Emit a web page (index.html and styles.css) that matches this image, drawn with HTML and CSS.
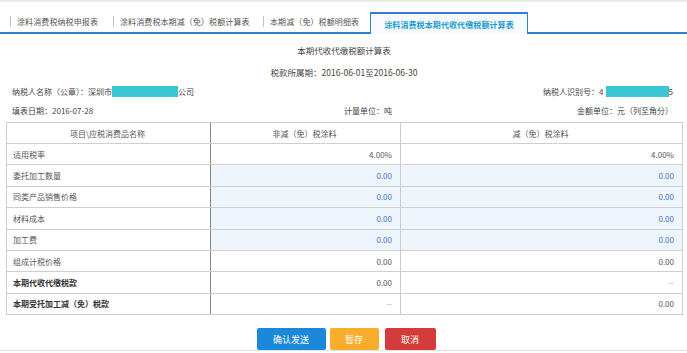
FILE: index.html
```html
<!DOCTYPE html>
<html lang="zh-CN">
<head>
  <meta charset="UTF-8">
  <title>本期代收代缴税额计算表</title>
  <link rel="stylesheet" href="styles.css">
</head>
<body>
  <div class="top-line"></div>
  <div class="tab-bar">
    <div class="tab"><span class="tab-sep"></span>涂料消费税纳税申报表</div>
    <div class="tab"><span class="tab-sep"></span>涂料消费税本期减（免）税额计算表</div>
    <div class="tab"><span class="tab-sep"></span>本期减（免）税额明细表</div>
    <div class="tab active">涂料消费税本期代收代缴税额计算表</div>
  </div>

  <div class="sheet">
    <div class="sheet-title">本期代收代缴税额计算表</div>
    <div class="sheet-period">税款所属期：2016-06-01至2016-06-30</div>

    <div class="info-row">
      <span>纳税人名称（公章）：深圳市<span class="mask mask-name"></span>公司</span>
      <span>纳税人识别号：4<span class="mask mask-id"></span>5</span>
    </div>
    <div class="info-row three">
      <span>填表日期：2016-07-28</span>
      <span>计量单位：吨</span>
      <span>金额单位：元（列至角分）</span>
    </div>

    <table class="calc-table">
      <thead>
        <tr>
          <th class="col-name">项目\应税消费品名称</th>
          <th class="col-a">非减（免）税涂料</th>
          <th class="col-b">减（免）税涂料</th>
        </tr>
      </thead>
      <tbody>
        <tr>
          <td>适用税率</td>
          <td class="num">4.00%</td>
          <td class="num">4.00%</td>
        </tr>
        <tr class="input">
          <td>委托加工数量</td>
          <td class="num">0.00</td>
          <td class="num">0.00</td>
        </tr>
        <tr class="input">
          <td>同类产品销售价格</td>
          <td class="num">0.00</td>
          <td class="num">0.00</td>
        </tr>
        <tr class="input">
          <td>材料成本</td>
          <td class="num">0.00</td>
          <td class="num">0.00</td>
        </tr>
        <tr class="input">
          <td>加工费</td>
          <td class="num">0.00</td>
          <td class="num">0.00</td>
        </tr>
        <tr>
          <td>组成计税价格</td>
          <td class="num">0.00</td>
          <td class="num">0.00</td>
        </tr>
        <tr class="strong">
          <td>本期代收代缴税款</td>
          <td class="num">0.00</td>
          <td class="num dash">--</td>
        </tr>
        <tr class="strong">
          <td>本期受托加工减（免）税款</td>
          <td class="num dash">--</td>
          <td class="num">0.00</td>
        </tr>
      </tbody>
    </table>

    <div class="actions">
      <button class="btn btn-send">确认发送</button>
      <button class="btn btn-save">暂存</button>
      <button class="btn btn-cancel">取消</button>
    </div>
  </div>
  <div class="bottom-line"></div>
</body>
</html>
```

FILE: styles.css
```css
body {
  margin: 0;
  background-color: #fff;
  font-family: "Noto Sans CJK SC", "DejaVu Sans", sans-serif;
  font-size: 8px;
  color: #555;
  width: 687px;
  height: 353px;
  overflow: hidden;
}

.top-line {
  height: 2px;
  background-color: #e4ece6;
}

/* Tabs */
.tab-bar {
  display: flex;
  align-items: flex-end;
  height: 29px;
  margin-top: 1px;
  padding-left: 10px;
  border-bottom: 2px solid #2f7fce;
}
.tab {
  display: flex;
  align-items: center;
  box-sizing: border-box;
  height: 21px;
  font-size: 8px;
  letter-spacing: 0.1px;
  color: #555;
  white-space: nowrap;
}
.tab-sep {
  display: inline-block;
  width: 1px;
  height: 11px;
  background-color: #b9c4cc;
  margin-right: 6px;
}
.tab:nth-child(1) { width: 103px; }
.tab:nth-child(2) { width: 150px; }
.tab:nth-child(3) { width: 107px; }
.tab.active {
  width: 158px;
  height: 22px;
  justify-content: center;
  background-color: #f7fbff;
  border: 1px solid #2f7fce;
  border-bottom: none;
  border-top-width: 2px;
  color: #1c9bd0;
  font-weight: bold;
  position: relative;
  top: 2px;
}

/* Sheet */
.sheet {
  padding: 0 5px 0 6px;
}
.sheet-title {
  text-align: center;
  font-size: 8.5px;
  color: #444;
  margin-top: 9px;
  height: 14px;
  line-height: 14px;
}
.sheet-period {
  text-align: center;
  font-size: 8.5px;
  color: #444;
  margin-top: 8px;
  height: 14px;
  line-height: 14px;
}
.info-row {
  display: flex;
  justify-content: space-between;
  align-items: center;
  padding: 0 9px 0 6px;
  height: 14px;
  line-height: 14px;
  margin-top: 6px;
  color: #444;
}
.info-row.three {
  display: grid;
  grid-template-columns: 332px 1fr auto;
  margin-top: 5px;
}
.mask {
  display: inline-block;
  height: 11px;
  vertical-align: -2px;
  background-color: #3bc6d3;
}
.mask-name { width: 66px; }
.mask-id { width: 63px; margin-left: 2px; }

/* Table */
.calc-table {
  width: 677px;
  margin-top: 4px;
  border-collapse: collapse;
  border: 1px solid #cfcfcf;
  font-size: 8px;
}
.calc-table th,
.calc-table td {
  border-top: 1px solid #cfcfcf;
  border-bottom: 1px solid #cfcfcf;
  height: 20.4px;
  padding: 0 8px 0 6px;
  color: #555;
}
.calc-table th {
  height: 20px;
  font-weight: normal;
  text-align: center;
}
.calc-table .col-name { width: 189px; }
.calc-table .col-a { width: 175px; }
.calc-table th:nth-child(2),
.calc-table td:nth-child(2) {
  border-left: 1px solid #888;
  border-right: 1px solid #ccc;
}
.calc-table td.num {
  text-align: right;
}
.calc-table td.dash {
  color: #aaa;
}
.calc-table tr.input td:not(:first-child) {
  background-color: #eef5fd;
  color: #3d72c4;
}
.calc-table tr.strong td:first-child {
  font-weight: bold;
  color: #333;
}

/* Buttons */
.actions {
  display: flex;
  justify-content: center;
  gap: 4px;
  margin-top: 13px;
  padding-left: 4px;
}
.btn {
  height: 22px;
  border: none;
  border-radius: 2px;
  color: #fff;
  font-family: inherit;
  font-size: 9px;
  cursor: pointer;
}
.btn-send { width: 69px; background-color: #1b88da; }
.btn-save { width: 49px; background-color: #f9ad2d; }
.btn-cancel { width: 51px; margin-left: 2px; background-color: #d43b3a; }

.bottom-line {
  height: 1px;
  background-color: #dde3e0;
}
```
